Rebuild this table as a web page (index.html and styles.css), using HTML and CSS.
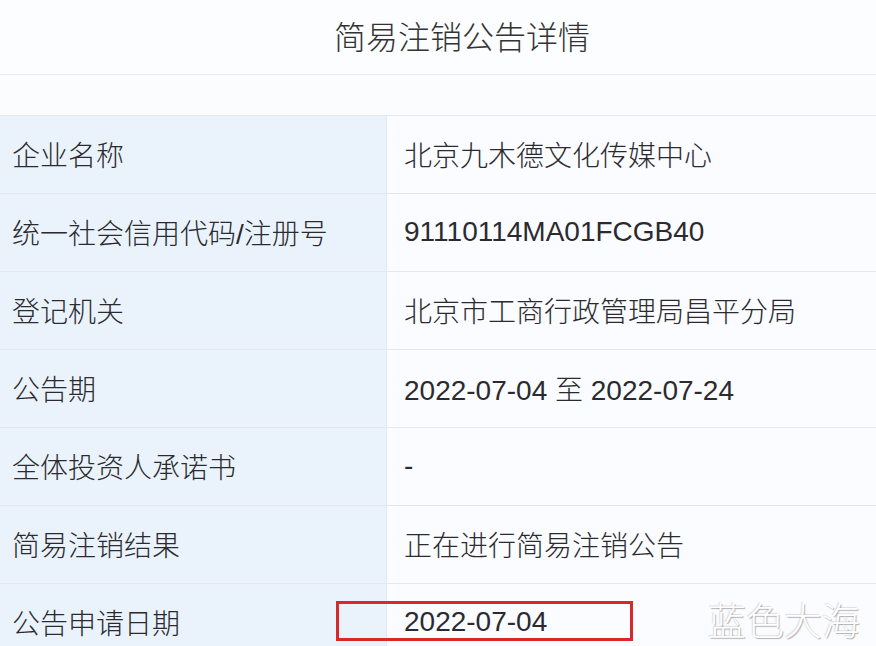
FILE: index.html
```html
<!DOCTYPE html>
<html lang="zh-CN">
<head>
  <meta charset="UTF-8" />
  <title>简易注销公告详情</title>
  <link rel="stylesheet" href="styles.css">
</head>
<body>

  <section class="notice">
    <h1 class="notice-title">简易注销公告详情</h1>
    <div class="spacer-row"></div>

    <div class="detail-row">
      <div class="label">企业名称</div>
      <div class="value">北京九木德文化传媒中心</div>
    </div>
    <div class="detail-row">
      <div class="label">统一社会信用代码/注册号</div>
      <div class="value">91110114MA01FCGB40</div>
    </div>
    <div class="detail-row">
      <div class="label">登记机关</div>
      <div class="value">北京市工商行政管理局昌平分局</div>
    </div>
    <div class="detail-row">
      <div class="label">公告期</div>
      <div class="value">2022-07-04 至 2022-07-24</div>
    </div>
    <div class="detail-row">
      <div class="label">全体投资人承诺书</div>
      <div class="value">-</div>
    </div>
    <div class="detail-row">
      <div class="label">简易注销结果</div>
      <div class="value">正在进行简易注销公告</div>
    </div>
    <div class="detail-row last">
      <div class="label">公告申请日期</div>
      <div class="value">2022-07-04</div>
      <!-- highlight box drawn over the date -->
      <span class="highlight"></span>
    </div>
  </section>

  <div class="watermark">蓝色大海</div>

</body>
</html>
```

FILE: styles.css
```css
* {
  box-sizing: border-box;
}

body {
  margin: 0;
  height: 646px;
  overflow: hidden;
  background-color: #fbfcfe;
  font-family: "Liberation Sans", "Noto Sans CJK SC", sans-serif;
  color: #2b2b2f;
  position: relative;
}

.notice-title {
  margin: 0;
  height: 75px;
  display: flex;
  align-items: center;
  justify-content: center;
  padding-left: 48px;
  padding-bottom: 4px;
  font-size: 32px;
  font-weight: 300;
  color: #333;
  border-bottom: 1px solid #e9edf3;
  background: #fcfdff;
}

.spacer-row {
  height: 41px;
  border-bottom: 1px solid #e3e8ef;
}

.detail-row {
  display: grid;
  grid-template-columns: 387px 1fr;
  height: 78px;
  border-bottom: 1px solid #e3e8ef;
  position: relative;
}

.detail-row .label,
.detail-row .value {
  display: flex;
  align-items: center;
  font-size: 28px;
  font-weight: 300;
  padding-bottom: 2px;
}

.detail-row .label {
  background-color: #eaf3fc;
  padding-left: 12px;
  border-right: 1px solid #e3e8ef;
}

.detail-row .value {
  background-color: #fbfcff;
  padding-left: 17px;
}

.highlight {
  position: absolute;
  left: 336px;
  top: 17px;
  width: 297px;
  height: 40px;
  border: 3px solid #d8282a;
}

.watermark {
  position: absolute;
  right: 16px;
  bottom: 0;
  font-family: "Noto Sans CJK SC", sans-serif;
  font-size: 38px;
  font-weight: 300;
  color: #ffffff;
  text-shadow: 1px 1px 1px rgba(0,0,0,0.3), -1px -1px 1px rgba(0,0,0,0.12);
}
```
